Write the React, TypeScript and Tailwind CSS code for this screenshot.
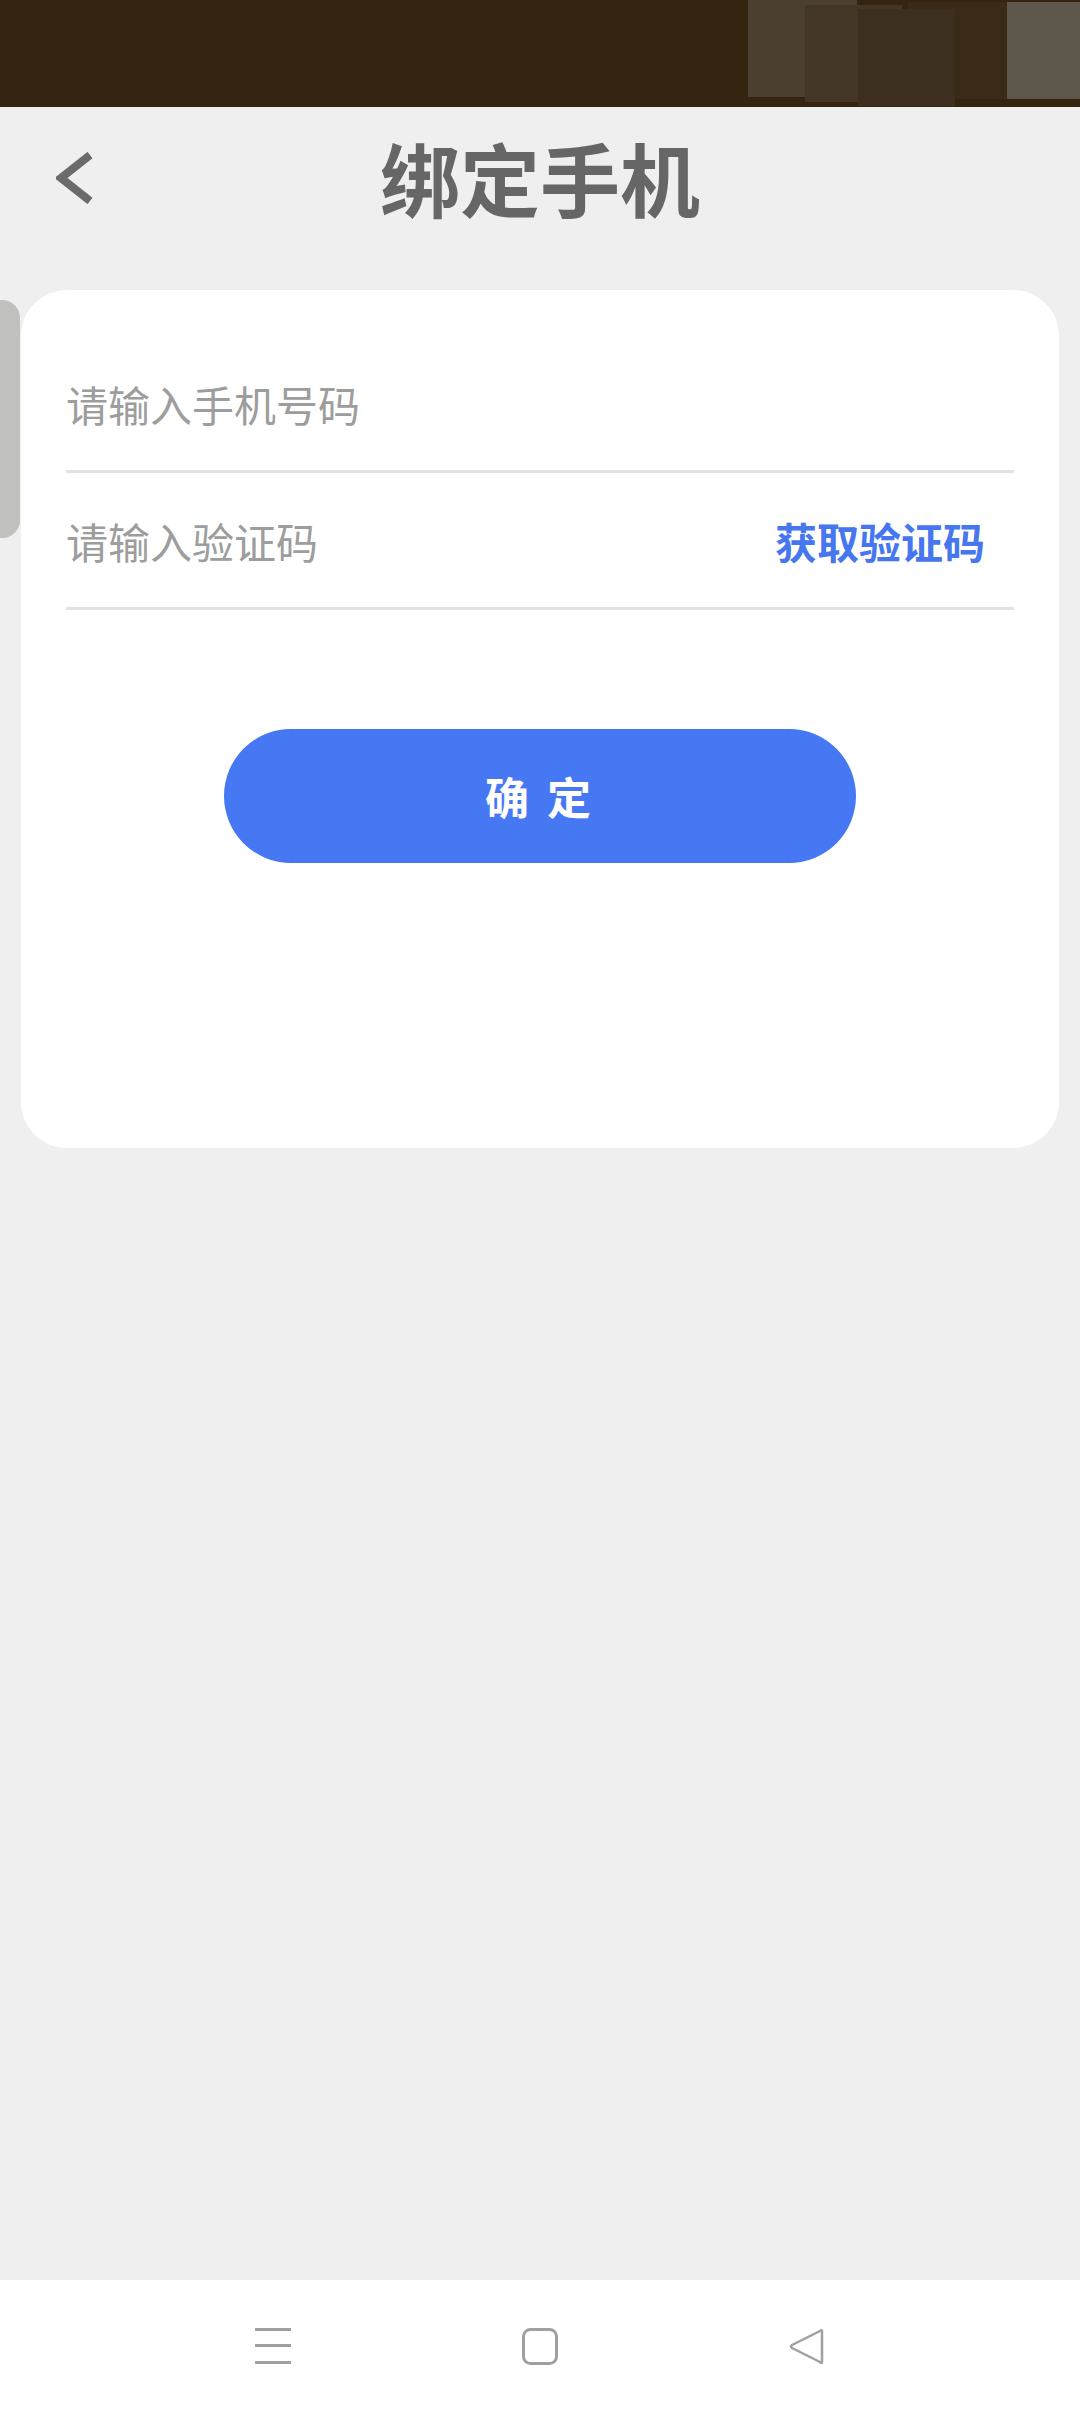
export default function App () {
  const font = { fontFamily: '"Noto Sans CJK SC", "Noto Sans", sans-serif' };

  return (
    <div className="relative flex h-[2412px] w-[1080px] flex-col overflow-hidden bg-[#efefef]" style={font}>
      {/* 状态栏（打码） */}
      <div className="relative h-[107px] shrink-0 bg-[#35240f]">
        <div className="absolute left-[748px] top-0 h-[97px] w-[109px] bg-[#4a3f31]" />
        <div className="absolute left-[805px] top-[5px] h-[97px] w-[97px] bg-[#433626]" />
        <div className="absolute left-[908px] top-[2px] h-[97px] w-[99px] bg-[#3a2a18]" />
        <div className="absolute left-[858px] top-[9px] h-[97px] w-[97px] bg-[#3c2f20]" />
        <div className="absolute left-[1007px] top-[2px] h-[97px] w-[73px] bg-[#5e574c]" />
      </div>

      {/* 侧边把手 */}
      <div className="absolute left-0 top-[300px] h-[238px] w-[20px] rounded-r-[18px] bg-[#c0c1bd]" />

      <main className="flex-1">
        {/* 标题栏 */}
        <div className="grid h-[142px] grid-cols-[1fr_auto_1fr] items-center">
          <div className="pl-[56px]">
            <svg width="40" height="52" viewBox="0 0 40 52" fill="none">
              <polyline points="34,3 5,26 34,49" stroke="#6b6b6b" strokeWidth="8" strokeLinejoin="miter" />
            </svg>
          </div>
          <h1 className="-mt-[4px] text-[80px] font-bold leading-none text-[#666666]">绑定手机</h1>
          <div />
        </div>

        {/* 表单卡片 */}
        <div className="mx-[21px] mt-[41px] h-[858px] rounded-[46px] bg-white px-[45px] pt-[46px]">
          <div className="box-border flex h-[137px] items-center border-b-[3px] border-[#e2e2e2]">
            <span className="text-[42px] text-[#9d9d9d]">请输入手机号码</span>
          </div>
          <div className="box-border flex h-[137px] items-center justify-between border-b-[3px] border-[#e2e2e2] pr-[29px]">
            <span className="text-[42px] text-[#9d9d9d]">请输入验证码</span>
            <span className="text-[42px] font-bold text-[#4677ef]">获取验证码</span>
          </div>

          <div className="mt-[119px] flex justify-center">
            <button className="flex h-[134px] w-[632px] items-center justify-center rounded-full bg-[#4778f4] text-[44px] font-bold tracking-[4px] text-white">
              确 定
            </button>
          </div>
        </div>
      </main>

      {/* 系统导航栏 */}
      <div className="flex h-[132px] shrink-0 items-center justify-center gap-[231px] bg-white">
        <svg width="36" height="36" viewBox="0 0 36 36">
          <rect x="0" y="0" width="36" height="3" fill="#a0a0a0" />
          <rect x="0" y="16" width="36" height="3" fill="#a0a0a0" />
          <rect x="0" y="33" width="36" height="3" fill="#a0a0a0" />
        </svg>
        <svg width="36" height="37" viewBox="0 0 36 37" fill="none">
          <rect x="1.5" y="1.5" width="33" height="34" rx="7" stroke="#a0a0a0" strokeWidth="3" />
        </svg>
        <svg width="36" height="37" viewBox="0 0 36 37" fill="none">
          <path d="M33 3 L33 34 Q33 36 31 34 L3 20 Q1 18.5 3 17 L31 3 Q33 1.5 33 3 Z" stroke="#a0a0a0" strokeWidth="2.5" strokeLinejoin="round" />
        </svg>
      </div>
    </div>
  );
}
